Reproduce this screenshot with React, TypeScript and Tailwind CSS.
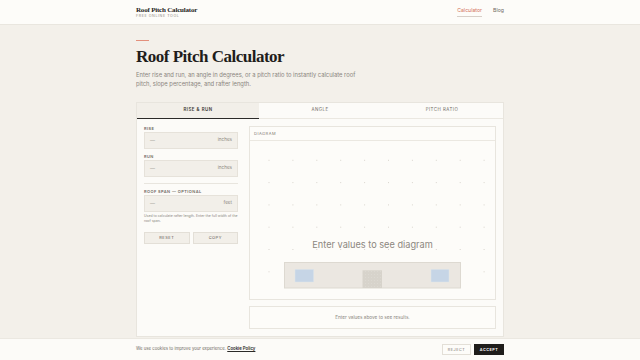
import React from "react"

const sans = { fontFamily: "Inter, 'Noto Sans', sans-serif" }
const serif = { fontFamily: "'Liberation Serif', 'DejaVu Serif', serif" }

function Field({ label, unit }: { label: string; unit: string }) {
    return (
        <div className="flex flex-col">
            <span className="text-[4px] leading-[6px] tracking-[0.4px] font-semibold text-[#6f6a63] uppercase">{label}</span>
            <div className="h-[17px] bg-[#f2efe9] border border-[#e6e2da] flex items-center justify-between px-[5px]">
                <span className="text-[5px] text-[#9b968e]">—</span>
                <span className="text-[4.6px] text-[#8d8880]">{unit}</span>
            </div>
        </div>
    )
}

function Diagram() {
    const cols = Array.from({ length: 10 }, (_, i) => 19 + i * 23.9)
    const rows = Array.from({ length: 6 }, (_, j) => 19.3 + j * 22.3)
    return (
        <svg width="245" height="158" viewBox="0 0 245 158" className="block">
            <defs>
                <pattern id="doordots" width="3" height="3" patternUnits="userSpaceOnUse">
                    <rect x="1" y="1" width="0.6" height="0.6" fill="#e6e2dc" />
                </pattern>
            </defs>
            {rows.map((y, j) =>
                cols.map((x, i) => <rect key={`${i}-${j}`} x={x - 0.5} y={y - 0.5} width="1" height="1" fill="#d9d5ce" />)
            )}
            <rect x="34.5" y="121.5" width="176" height="25.5" fill="#ebe7e1" stroke="#ddd9d1" strokeWidth="1" />
            <rect x="45" y="128.3" width="18.7" height="12.7" fill="#c6d5e6" stroke="#dfe5ea" strokeWidth="0.5" />
            <rect x="181" y="128.3" width="18" height="12.7" fill="#c6d5e6" stroke="#dfe5ea" strokeWidth="0.5" />
            <rect x="112.5" y="129.3" width="19.5" height="17.7" fill="#d7d3cb" />
            <rect x="112.5" y="129.3" width="19.5" height="17.7" fill="url(#doordots)" />
            <text x="122.5" y="106.6" textAnchor="middle" fontSize="9.2" fill="#8c8780" style={sans}>
                Enter values to see diagram
            </text>
        </svg>
    )
}

export default function App() {
    return (
        <div className="min-h-screen bg-[#f3f0ea] flex flex-col" style={sans}>
            <header className="h-[25px] bg-[#fdfcf9] border-b border-[#e9e6df]">
                <div className="w-[368px] mx-auto h-full flex items-center justify-between">
                    <div className="flex flex-col">
                        <span className="text-[7px] leading-[8px] font-bold tracking-[-0.2px] text-[#1f1d1b]" style={serif}>Roof Pitch Calculator</span>
                        <span className="text-[3.6px] leading-[5px] tracking-[0.6px] text-[#8d8880]">FREE ONLINE TOOL</span>
                    </div>
                    <nav className="flex items-center gap-[11px] text-[5.2px]">
                        <span className="text-[#d3715b] border-b border-[#d8cfc8] pb-[1px]">Calculator</span>
                        <span className="text-[#6f6a63] pb-[2px]">Blog</span>
                    </nav>
                </div>
            </header>

            <main className="w-[368px] mx-auto pt-[15px]">
                <div className="w-[13px] h-px bg-[#e3907c]" />
                <h1 className="mt-[7px] text-[17px] leading-[17px] font-bold tracking-[-0.5px] text-[#1f1d1b]" style={serif}>Roof Pitch Calculator</h1>
                <p className="mt-[6px] text-[5.8px] leading-[8.5px] text-[#8a857e]">
                    Enter rise and run, an angle in degrees, or a pitch ratio to instantly calculate roof<br />
                    pitch, slope percentage, and rafter length.
                </p>

                <div className="mt-[14px] bg-[#fcfbf8] border border-[#e8e5de]">
                    <div className="flex h-[16px] text-[4.4px] tracking-[0.5px] text-[#6f6a63]">
                        <div className="flex-1 flex items-center justify-center bg-[#f2efe9] border-b border-[#2b2a28] font-semibold text-[#3b3834]">RISE &amp; RUN</div>
                        <div className="flex-1 flex items-center justify-center border-b border-[#ebe8e1]">ANGLE</div>
                        <div className="flex-1 flex items-center justify-center border-b border-[#ebe8e1]">PITCH RATIO</div>
                    </div>

                    <div className="flex gap-[11px] p-[7px]">
                        <div className="w-[96px] flex flex-col">
                            <Field label="Rise" unit="inches" />
                            <div className="mt-[5px]">
                                <Field label="Run" unit="inches" />
                            </div>
                            <div className="mt-[6px] h-px bg-[#e8e5de]" />
                            <div className="mt-[5px]">
                                <Field label="Roof Span — Optional" unit="feet" />
                            </div>
                            <p className="mt-[2px] text-[3.5px] leading-[5px] text-[#8a857e]">
                                Used to calculate rafter length. Enter the full width of the roof span.
                            </p>
                            <div className="mt-[8px] flex gap-[3px]">
                                <button className="flex-1 h-[12px] bg-[#f2efe9] border border-[#e3dfd7] text-[4px] tracking-[0.5px] text-[#5f5a54]">RESET</button>
                                <button className="flex-1 h-[12px] bg-[#f2efe9] border border-[#e3dfd7] text-[4px] tracking-[0.5px] text-[#5f5a54]">COPY</button>
                            </div>
                        </div>

                        <div className="flex-1 flex flex-col gap-[6px]">
                            <div className="bg-[#fdfcf9] border border-[#e8e5de]">
                                <div className="h-[14px] border-b border-[#ebe8e1] flex items-center px-[4px] text-[4px] tracking-[0.5px] text-[#7d7871]">DIAGRAM</div>
                                <Diagram />
                            </div>
                            <div className="h-[23px] bg-[#fdfcf9] border border-[#e8e5de] flex items-center justify-center text-[4.7px] text-[#8a857e]">
                                Enter values above to see results.
                            </div>
                        </div>
                    </div>
                </div>
            </main>

            <div className="fixed bottom-0 left-0 right-0 h-[22px] bg-[#fcfbf8] border-t border-[#ebe8e1]">
                <div className="w-[368px] mx-auto h-full flex items-center justify-between">
                    <span className="text-[4.3px] text-[#6f6a63]">
                        We use cookies to improve your experience. <span className="text-[#2b2a28] underline font-semibold">Cookie Policy</span>
                    </span>
                    <div className="flex gap-[3px]">
                        <button className="w-[29px] h-[11px] border border-[#e3dfd7] bg-[#fdfcf9] text-[3.8px] tracking-[0.5px] text-[#7d7871]">REJECT</button>
                        <button className="w-[30px] h-[11px] bg-[#1f1d1b] text-[3.8px] tracking-[0.5px] text-white font-semibold">ACCEPT</button>
                    </div>
                </div>
            </div>
        </div>
    )
}
